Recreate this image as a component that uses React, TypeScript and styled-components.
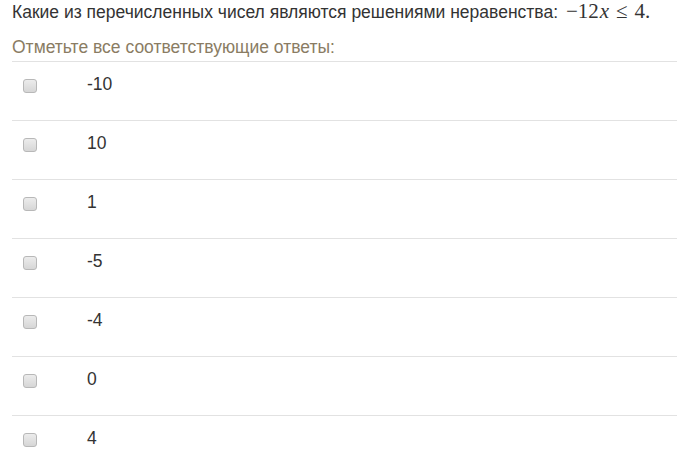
import React from 'react'
import styled, {createGlobalStyle} from 'styled-components'

const GlobalStyle = createGlobalStyle`
  html, body {
    margin: 0;
    padding: 0;
    background: #fff;
  }
  body {
    font-family: 'Liberation Sans', Arial, sans-serif;
    color: #333;
  }
`

const Page = styled.div`
  padding: 1px 0 0 12px;
  overflow: hidden;
  height: 452px;
  box-sizing: border-box;
`

const Question = styled.div`
  font-size: 17.5px;
  line-height: 20px;
  height: 20px;
  color: #333;
  white-space: nowrap;
`

const Math = styled.span`
  font-family: 'Liberation Serif', 'DejaVu Serif', serif;
  font-size: 21px;
  line-height: 20px;
  margin-left: 3px;
`

const MathVar = styled.i`
  font-style: italic;
  margin-left: 1px;
`

const MathOp = styled.span`
  margin: 0 7px;
`

const Hint = styled.div`
  margin-top: 16px;
  font-size: 17.5px;
  line-height: 20px;
  color: #8a7c63;
  padding-bottom: 4px;
  border-bottom: 1px solid #e2e2e2;
`

const Options = styled.ul`
  list-style: none;
  margin: 0;
  padding: 0;
`

const Option = styled.li`
  display: flex;
  align-items: flex-start;
  height: 58px;
  border-bottom: 1px solid #e2e2e2;
  box-sizing: content-box;
`

const Box = styled.span`
  width: 12px;
  height: 12px;
  margin: 17px 0 0 11px;
  border: 1px solid #b8b8b8;
  border-radius: 3px;
  background: linear-gradient(#ececec, #d6d6d6);
  box-sizing: content-box;
  flex: none;
`

const Label = styled.span`
  margin: 12px 0 0 50px;
  font-size: 17.5px;
  line-height: 20px;
  color: #333;
`

const answers = ['-10', '10', '1', '-5', '-4', '0', '4']

export default function App() {
  return (
    <>
      <GlobalStyle />
      <Page>
        <Question>
          Какие из перечисленных чисел являются решениями неравенства:{' '}
          <Math>
            −12<MathVar>x</MathVar>
            <MathOp>≤</MathOp>4.
          </Math>
        </Question>
        <Hint>Отметьте все соответствующие ответы:</Hint>
        <Options>
          {answers.map(a => (
            <Option key={a}>
              <Box />
              <Label>{a}</Label>
            </Option>
          ))}
        </Options>
      </Page>
    </>
  )
}
